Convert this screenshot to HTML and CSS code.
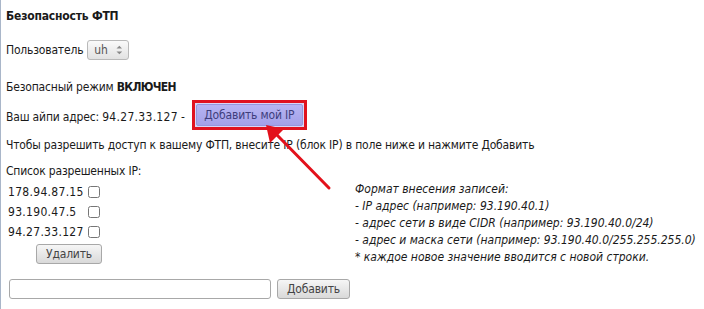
FILE: index.html
```html
<!DOCTYPE html>
<html lang="ru">
  <head>
    <meta charset="utf-8" />
    <title>Безопасность ФТП</title>
    <link rel="stylesheet" href="styles.css">
  </head>
  <body>
    <div class="panel">
        <div class="title">Безопасность ФТП</div>

        <div class="row user-row">
            Пользователь
            <span class="select">uh
                <svg width="7" height="12" viewBox="0 0 7 12"><path d="M0.5 4.5 L3.5 1.5 L6.5 4.5 Z M0.5 7.5 L3.5 10.5 L6.5 7.5 Z" fill="#888"/></svg>
            </span>
        </div>

        <div class="line mode-line">Безопасный режим <b>ВКЛЮЧЕН</b></div>

        <div class="row ip-row">
            <span class="ip-text">Ваш айпи адрес: <span class="num">94.27.33.127</span> -</span>
            <span class="marked"><button class="btn btn-my-ip" type="button">Добавить мой IP</button></span>
        </div>

        <div class="line hint-line">Чтобы разрешить доступ к вашему ФТП, внесите IP (блок IP) в поле ниже и нажмите Добавить</div>

        <div class="lists">
            <div class="allowed">
                <div class="allowed-label">Список разрешенных IP:</div>
                <table class="ip-table">
                    <tr><td class="ip">178.94.87.15</td><td><input type="checkbox" /></td></tr>
                    <tr><td class="ip">93.190.47.5</td><td><input type="checkbox" /></td></tr>
                    <tr><td class="ip">94.27.33.127</td><td><input type="checkbox" /></td></tr>
                </table>
                <button class="btn btn-delete" type="button">Удалить</button>
            </div>
            <div class="format">
                Формат внесения записей:<br />
                - IP адрес (например: 93.190.40.1)<br />
                - адрес сети в виде CIDR (например: 93.190.40.0/24)<br />
                - адрес и маска сети (например: 93.190.40.0/255.255.255.0)<br />
                * каждое новое значение вводится с новой строки.
            </div>
        </div>

        <div class="add-row">
            <input class="ip-input" type="text" />
            <button class="btn btn-add" type="button">Добавить</button>
        </div>

        <!-- red arrow pointing at the button -->
        <svg class="arrow" width="70" height="70" viewBox="0 0 70 70">
            <path d="M64 64 L12 11" stroke="#e3111b" stroke-width="3" stroke-linecap="round"/>
            <path d="M1 1 L19 5 L5 19 Z" fill="#e3111b"/>
        </svg>
    </div>
  </body>
</html>
```

FILE: styles.css
```css
body {
    margin: 0;
    background: #fff;
    font-family: "DejaVu Sans Condensed", "Liberation Sans", sans-serif;
    font-size: 12px;
    line-height: 15px;
    letter-spacing: -0.18px;
    color: #1a1a1a;
}

b {
    font-weight: bold;
    letter-spacing: -0.7px;
}

.title {
    font-weight: bold;
    letter-spacing: -0.2px;
}

.num,
.ip-table .ip {
    letter-spacing: 0.3px;
}

.panel {
    position: relative;
    height: 309px;
    box-sizing: border-box;
    border-left: 1px solid #a9b6c9;
    padding: 9px 0 0 5px;
}

.row {
    display: flex;
    align-items: center;
}

.user-row {
    margin-top: 16px;
    gap: 4px;
}

.select {
    display: inline-flex;
    align-items: center;
    gap: 8px;
    width: 42px;
    height: 20px;
    box-sizing: border-box;
    padding: 0 6px;
    border: 1px solid #b9b9b9;
    border-radius: 3px;
    background: linear-gradient(#fafafa, #e2e2e2);
    color: #555;
}

.mode-line {
    margin-top: 20px;
}

.ip-row {
    margin-top: 5px;
    gap: 7px;
}

.ip-text {
    padding-top: 4px;
}

.marked {
    border: 3px solid #e0121f;
    padding: 1px;
    background: #d8d6f6;
}

.btn {
    font-family: "DejaVu Sans Condensed", "Liberation Sans", sans-serif;
    font-size: 12px;
    letter-spacing: -0.18px;
    height: 20px;
    padding: 0;
    border: 1px solid #a8a8a8;
    border-radius: 3px;
    background: linear-gradient(#f6f6f6, #d9d9d9);
    color: #444;
    cursor: pointer;
}

.btn-my-ip {
    display: block;
    width: 107px;
    height: 22px;
    border: 1px solid #9896dc;
    border-radius: 2px;
    background: linear-gradient(#b6b4f2, #a3a1e8);
    color: #3e3e7c;
}

.hint-line {
    margin-top: 8px;
}

.lists {
    display: flex;
    margin-top: 11px;
}

.allowed {
    width: 349px;
    flex-shrink: 0;
}

.ip-table {
    border-collapse: collapse;
    margin: 3px 0 0 2px;
}

.ip-table td {
    padding: 0;
    height: 20px;
}

.ip-table .ip {
    width: 80px;
}

.ip-table input {
    margin: 0;
    width: 12px;
    height: 12px;
    vertical-align: middle;
}

.btn-delete {
    margin: 2px 0 0 30px;
    width: 66px;
}

.format {
    font-style: italic;
    letter-spacing: 0;
    line-height: 17px;
    margin-top: 17px;
    white-space: nowrap;
}

.add-row {
    display: flex;
    gap: 6px;
    margin-top: 13px;
    padding-left: 3px;
}

.ip-input {
    width: 262px;
    height: 20px;
    box-sizing: border-box;
    border: 1px solid #a8a8a8;
    border-radius: 3px;
    padding: 0;
}

.btn-add {
    width: 73px;
}

.arrow {
    position: absolute;
    left: 264px;
    top: 124px;
}
```
